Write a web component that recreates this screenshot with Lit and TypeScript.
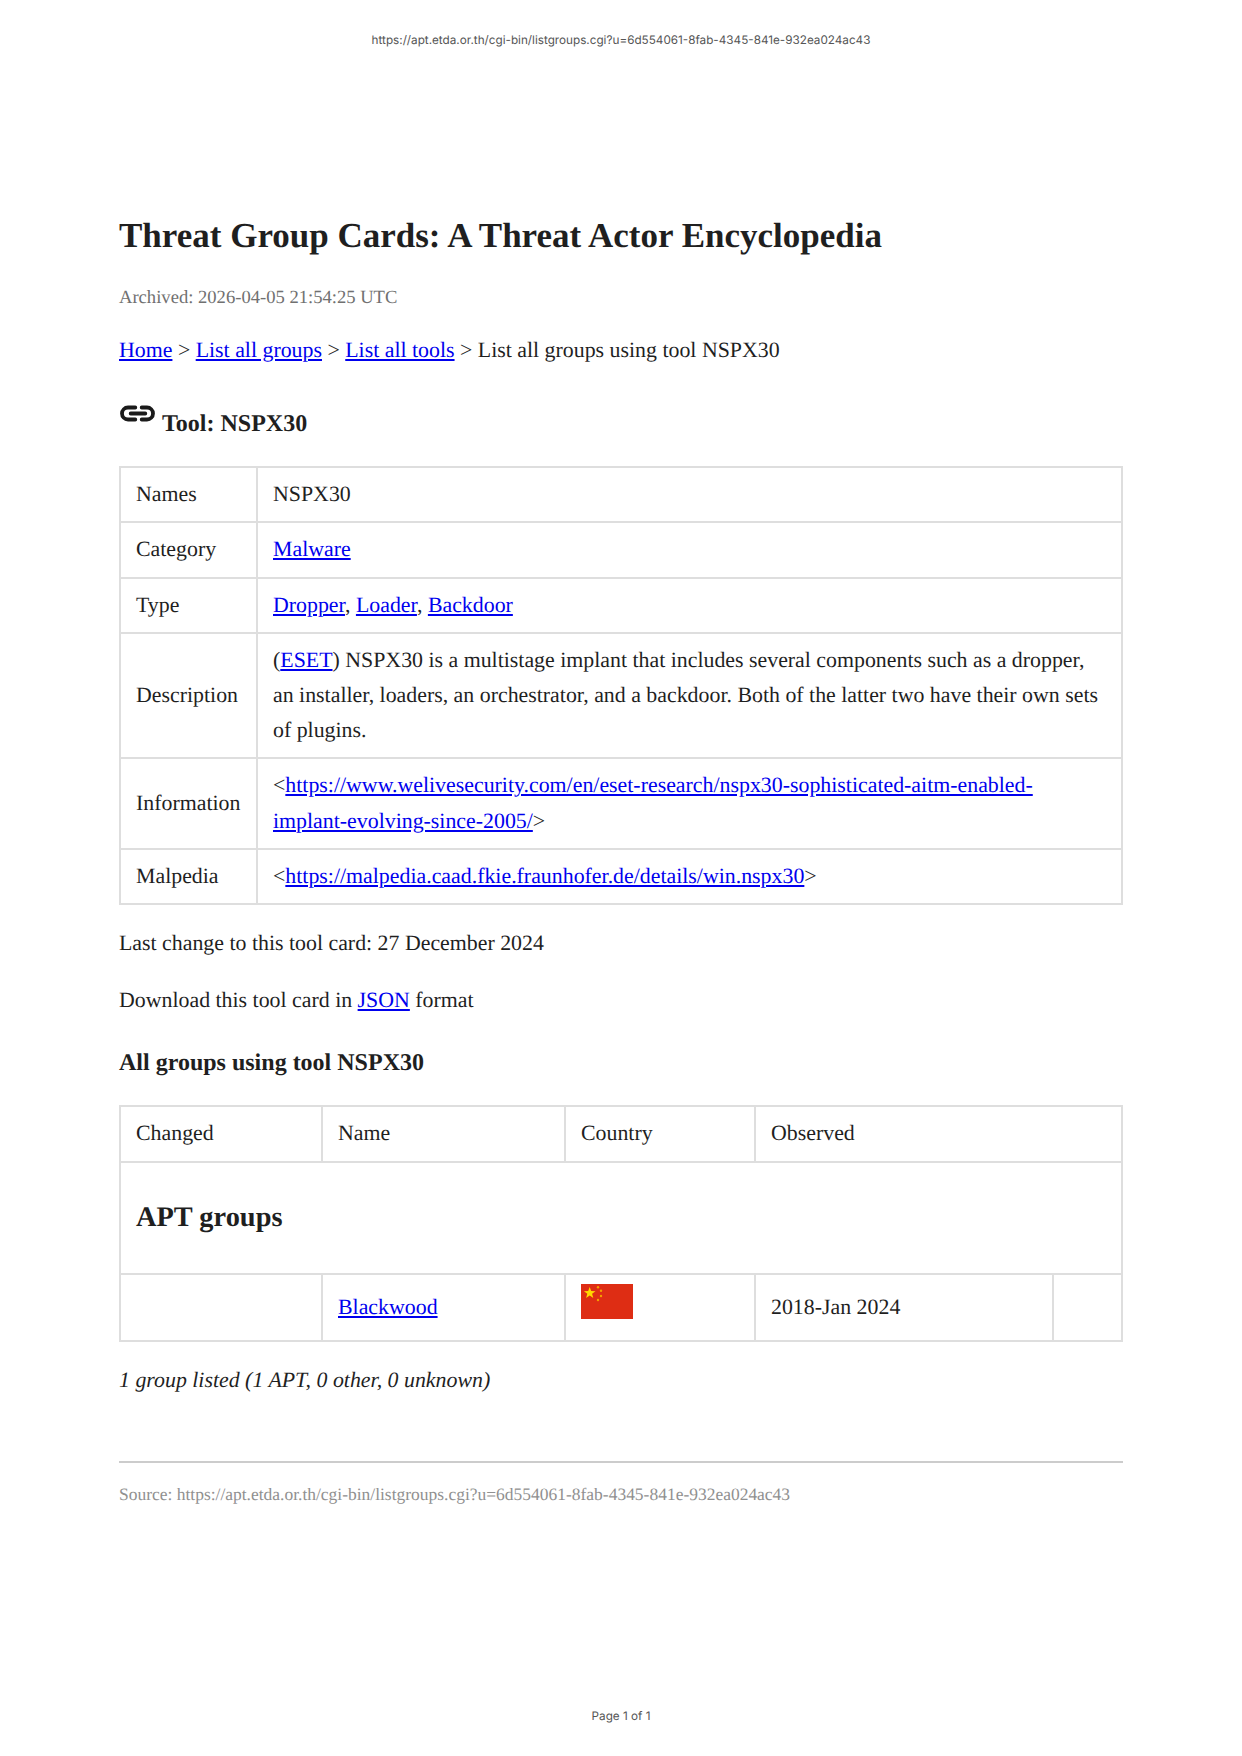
import { LitElement, html, css } from "lit";
import { customElement } from "lit/decorators.js";

@customElement("app-root")
export class AppRoot extends LitElement {
  static styles = css`
    :host { display: block; width: 1242px; height: 1756px; background: #fff; position: relative; overflow: hidden;
      font-family: "Liberation Serif", serif; font-size: 21.87px; line-height: 35.2px; color: #1f1f1f; text-rendering: geometricPrecision; }
    .runhead, .runfoot { position: absolute; left: 0; right: 0; text-align: center; font-family: "Inter", "Liberation Sans", sans-serif; font-size: 11.73px; line-height: 16px; color: #555; }
    .runhead { top: 32px; }
    .runfoot { top: 1708px; }
    .page { padding: 214px 119px 0; display: flex; flex-direction: column; }
    h1 { margin: 0; font-size: 35px; line-height: 44px; font-weight: bold; }
    .arch { margin: 25px 0 0; font-size: 18.6px; line-height: 30px; color: #707070; }
    p { margin: 0; }
    .crumbs { margin-top: 20px; }
    a { color: #0000ee; text-decoration: underline; }
    h2 { margin: 34px 0 0; font-size: 24px; line-height: 44px; font-weight: bold; display: flex; align-items: flex-start; }
    h2 svg { width: 36px; height: 24px; margin: 0 7px 0 0; flex: none; }
    table { border-collapse: collapse; table-layout: fixed; width: 1004px; }
    td { border: 2px solid #dedede; padding: 9px 15px; vertical-align: middle; }
    .t1 { margin-top: 20px; }
    .c1 { width: 137px; }
    .ca { width: 202px; } .cb { width: 243px; } .cc { width: 190px; } .cd { width: 298px; }
    .last { margin-top: 21px; }
    .dl { margin-top: 22px; }
    h3 { margin: 25px 0 0; font-size: 24px; line-height: 40px; font-weight: bold; }
    .t2 { margin-top: 22px; }
    .apt { font-size: 28.4px; font-weight: bold; line-height: 40px; padding: 35px 15px; }
    .flagcell { vertical-align: top; }
    .flag { display: block; width: 52px; height: 35px; }
    .blank { height: 12px; }
    .count { margin-top: 21px; font-style: italic; }
    .rule { height: 2px; background: #ccc; margin-top: 63px; }
    .src { margin-top: 17px; font-size: 17.48px; line-height: 28px; color: #909090; }
  `;

  render() {
    return html`
      <div class="runhead">https://apt.etda.or.th/cgi-bin/listgroups.cgi?u=6d554061-8fab-4345-841e-932ea024ac43</div>
      <div class="page">
        <h1>Threat Group Cards: A Threat Actor Encyclopedia</h1>
        <p class="arch">Archived: 2026-04-05 21:54:25 UTC</p>
        <p class="crumbs"><a href="#">Home</a> &gt; <a href="#">List all groups</a> &gt; <a href="#">List all tools</a> &gt; List all groups using tool NSPX30</p>
        <h2>
          <svg viewBox="0 0 36 24" fill="none" stroke="#1a1a1a" stroke-width="3.8" stroke-linecap="round" stroke-linejoin="round">
            <path d="M16.3 5.5H9a6 6 0 0 0 0 12h7.3M22.7 5.5H28a6 6 0 0 1 0 12h-5.300M11.7 11.5h14.600"/>
          </svg>
          <span>Tool: NSPX30</span>
        </h2>
        <table class="t1">
          <colgroup><col class="c1" /><col /></colgroup>
          <tr><td>Names</td><td>NSPX30</td></tr>
          <tr><td>Category</td><td><a href="#">Malware</a></td></tr>
          <tr><td>Type</td><td><a href="#">Dropper</a>, <a href="#">Loader</a>, <a href="#">Backdoor</a></td></tr>
          <tr><td>Description</td><td>(<a href="#">ESET</a>) NSPX30 is a multistage implant that includes several components such as a dropper, an installer, loaders, an orchestrator, and a backdoor. Both of the latter two have their own sets of plugins.</td></tr>
          <tr><td>Information</td><td>&lt;<a href="#">https://www.welivesecurity.com/en/eset-research/nspx30-sophisticated-aitm-enabled-implant-evolving-since-2005/</a>&gt;</td></tr>
          <tr><td>Malpedia</td><td>&lt;<a href="#">https://malpedia.caad.fkie.fraunhofer.de/details/win.nspx30</a>&gt;</td></tr>
        </table>
        <p class="last">Last change to this tool card: 27 December 2024</p>
        <p class="dl">Download this tool card in <a href="#">JSON</a> format</p>
        <h3>All groups using tool NSPX30</h3>
        <table class="t2">
          <colgroup><col class="ca" /><col class="cb" /><col class="cc" /><col class="cd" /><col /></colgroup>
          <tr><td>Changed</td><td>Name</td><td>Country</td><td colspan="2">Observed</td></tr>
          <tr><td colspan="5" class="apt">APT groups</td></tr>
          <tr>
            <td></td>
            <td><a href="#">Blackwood</a></td>
            <td class="flagcell">
              <svg class="flag" viewBox="0 0 52 35">
                <rect width="52" height="35" fill="#de2d14"/>
                <polygon fill="#ffd800" points="8.700,3 10.200,7.100 14.500,7.200 11.100,9.800 12.300,14 8.700,11.500 5.100,14 6.300,9.800 2.900,7.200 7.200,7.100"/>
                <circle cx="17" cy="3.300" r="1.200" fill="#f5a000"/>
                <circle cx="20" cy="6.700" r="1.200" fill="#f5a000"/>
                <circle cx="20" cy="12" r="1.200" fill="#f5a000"/>
                <circle cx="17" cy="16" r="1.200" fill="#f5a000"/>
              </svg>
              <div class="blank"></div>
            </td>
            <td>2018-Jan 2024</td>
            <td></td>
          </tr>
        </table>
        <p class="count">1 group listed (1 APT, 0 other, 0 unknown)</p>
        <div class="rule"></div>
        <p class="src">Source: https://apt.etda.or.th/cgi-bin/listgroups.cgi?u=6d554061-8fab-4345-841e-932ea024ac43</p>
      </div>
      <div class="runfoot">Page 1 of 1</div>
    `;
  }
}
